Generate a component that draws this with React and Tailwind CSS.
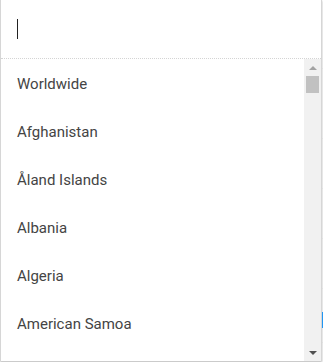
import React from 'react'

const countries = [
  'Worldwide',
  'Afghanistan',
  'Åland Islands',
  'Albania',
  'Algeria',
  'American Samoa',
]

export default function App() {
  return (
    <div className="flex w-[323px] h-[362px] bg-white overflow-hidden" style={{ fontFamily: 'Roboto, "Noto Sans", sans-serif' }}>
      {/* Dropdown panel */}
      <div className="flex flex-col w-[322px] h-[361px] border-l border-r border-[#d6d6d6] shadow-[0_1px_2px_rgba(0,0,0,0.3)]">
        {/* Search input */}
        <div className="h-[59px] shrink-0 flex items-center pl-[16px] border-b border-dotted border-[#d4d4d4]">
          <span className="block w-px h-[20px] bg-[#222]" />
        </div>

        {/* List */}
        <div className="flex flex-1 min-h-0">
          <ul className="flex-1 overflow-hidden">
            {countries.map(c => (
              <li key={c} className="h-[48px] flex items-center pl-[16px] pt-[3px] text-[15px] text-[#444] leading-none">
                {c}
              </li>
            ))}
          </ul>

          {/* Scrollbar */}
          <div className="w-[17px] shrink-0 bg-[#f1f1f1] flex flex-col items-center">
            <div className="h-[17px] w-full flex items-center justify-center">
              <div className="w-0 h-0 border-l-[4px] border-r-[4px] border-b-[4px] border-l-transparent border-r-transparent border-b-[#a3a3a3]" />
            </div>
            <div className="w-[13px] h-[17px] bg-[#c1c1c1]" />
            <div className="flex-1" />
            <div className="h-[17px] w-full flex items-center justify-center">
              <div className="w-0 h-0 border-l-[4px] border-r-[4px] border-t-[4px] border-l-transparent border-r-transparent border-t-[#505050]" />
            </div>
          </div>
        </div>
      </div>

      {/* Page sliver behind */}
      <div className="flex-1 relative">
        <div className="absolute left-0 top-[68px] w-full h-px bg-[#e0e0e0]" />
        <div className="absolute left-0 top-[138px] w-full h-px bg-[#e0e0e0]" />
        <div className="absolute left-0 top-[188px] w-full h-px bg-[#e0e0e0]" />
        <div className="absolute left-0 top-[238px] w-full h-px bg-[#e0e0e0]" />
        <div className="absolute left-0 top-[288px] w-full h-px bg-[#e0e0e0]" />
        <div className="absolute left-0 top-[312px] w-full h-[16px] bg-[#2196f3]" />
        <div className="absolute left-0 top-[342px] w-full h-px bg-[#e0e0e0]" />
      </div>
    </div>
  )
}
